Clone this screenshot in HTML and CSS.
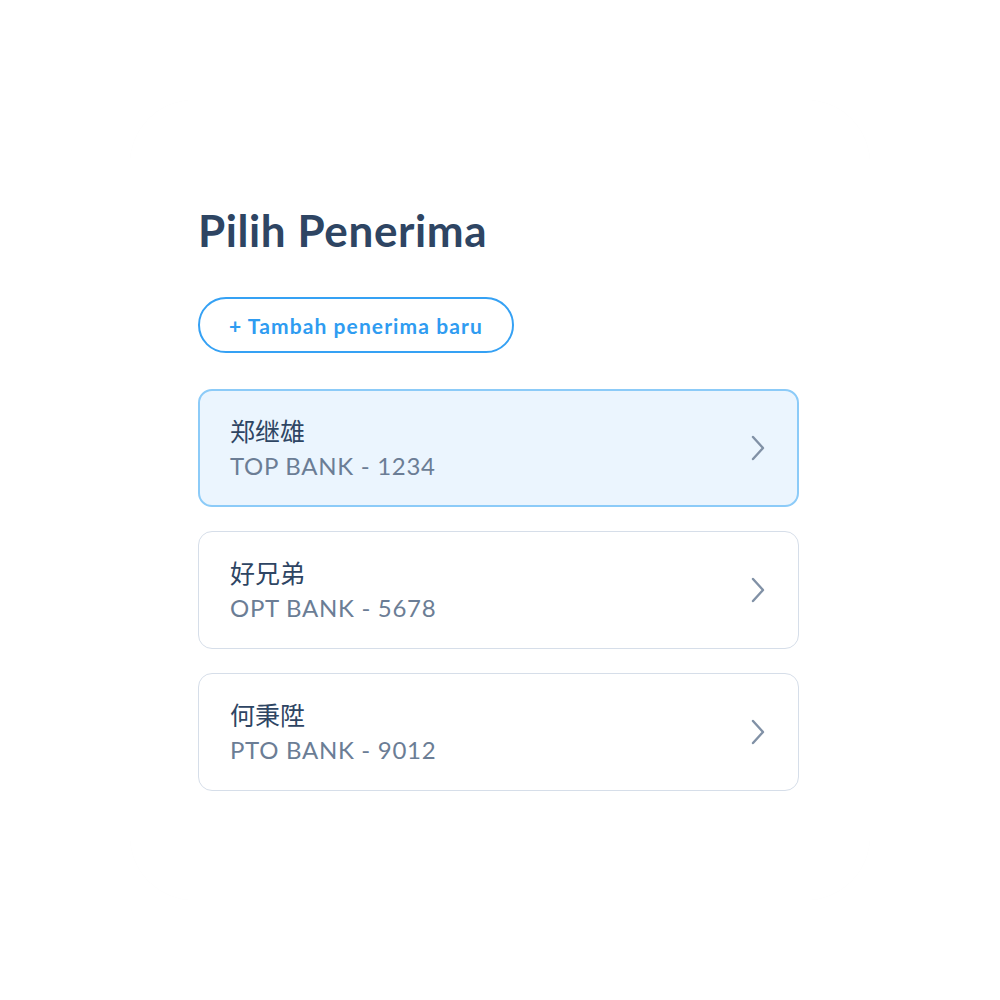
FILE: index.html
```html
<!DOCTYPE html>
<html>
<head>
<meta charset="utf-8">
<link rel="stylesheet" href="styles.css">
</head>
<body>
<div class="panel">
  <h1 class="title">Pilih Penerima</h1>
  <button class="add-btn">+ Tambah penerima baru</button>
  <div class="list">
    <div class="row active">
      <div class="info">
        <div class="name">郑继雄</div>
        <div class="bank">TOP BANK - 1234</div>
      </div>
      <svg class="chev" width="16" height="26" viewBox="0 0 16 26"><path d="M3 2 L13 13 L3 24" fill="none" stroke="#8191a6" stroke-width="2.4" stroke-linecap="round" stroke-linejoin="round"/></svg>
    </div>
    <div class="row">
      <div class="info">
        <div class="name">好兄弟</div>
        <div class="bank">OPT BANK - 5678</div>
      </div>
      <svg class="chev" width="16" height="26" viewBox="0 0 16 26"><path d="M3 2 L13 13 L3 24" fill="none" stroke="#8191a6" stroke-width="2.4" stroke-linecap="round" stroke-linejoin="round"/></svg>
    </div>
    <div class="row">
      <div class="info">
        <div class="name">何秉陞</div>
        <div class="bank">PTO BANK - 9012</div>
      </div>
      <svg class="chev" width="16" height="26" viewBox="0 0 16 26"><path d="M3 2 L13 13 L3 24" fill="none" stroke="#8191a6" stroke-width="2.4" stroke-linecap="round" stroke-linejoin="round"/></svg>
    </div>
  </div>
</div>
</body>
</html>
```
FILE: styles.css
```css
* { box-sizing: border-box; }
body {
  margin: 0;
  background: #ffffff;
  font-family: Lato, "Noto Sans", "Noto Sans CJK SC", sans-serif;
}
.panel {
  width: 740px;
  height: 800px;
  margin: 100px auto 0;
  border-radius: 64px;
  box-shadow: 0 0 1px rgba(0, 0, 0, 0.025);
  padding: 104px 71px 0 68px;
}
.title {
  margin: 0;
  font-size: 44px;
  line-height: 52px;
  font-weight: 700;
  color: #2e4563;
  letter-spacing: 0.6px;
}
.add-btn {
  display: block;
  margin-top: 41px;
  height: 56px;
  padding: 0 29px;
  border: 2px solid #35a1f4;
  border-radius: 28px;
  background: #fff;
  color: #2f9cf1;
  font-family: Lato, "Noto Sans", sans-serif;
  font-weight: 700;
  font-size: 21px;
  letter-spacing: 1.1px;
}
.list {
  margin-top: 36px;
  display: flex;
  flex-direction: column;
  gap: 24px;
}
.row {
  height: 118px;
  border: 1px solid #d6dee9;
  border-radius: 14px;
  display: flex;
  align-items: center;
  justify-content: space-between;
  padding: 0 32px 0 31px;
}
.row.active {
  background: #ebf5fe;
  border: 2px solid #8ccbf8;
  padding: 0 31px 0 30px;
}
.info {
  display: flex;
  flex-direction: column;
}
.name {
  font-family: "Noto Sans CJK SC", sans-serif;
  font-size: 25px;
  line-height: 35px;
  color: #2e4563;
}
.bank {
  font-size: 24px;
  line-height: 35px;
  color: #6b7d95;
  letter-spacing: 0.7px;
}
.chev { display: block; }
```
